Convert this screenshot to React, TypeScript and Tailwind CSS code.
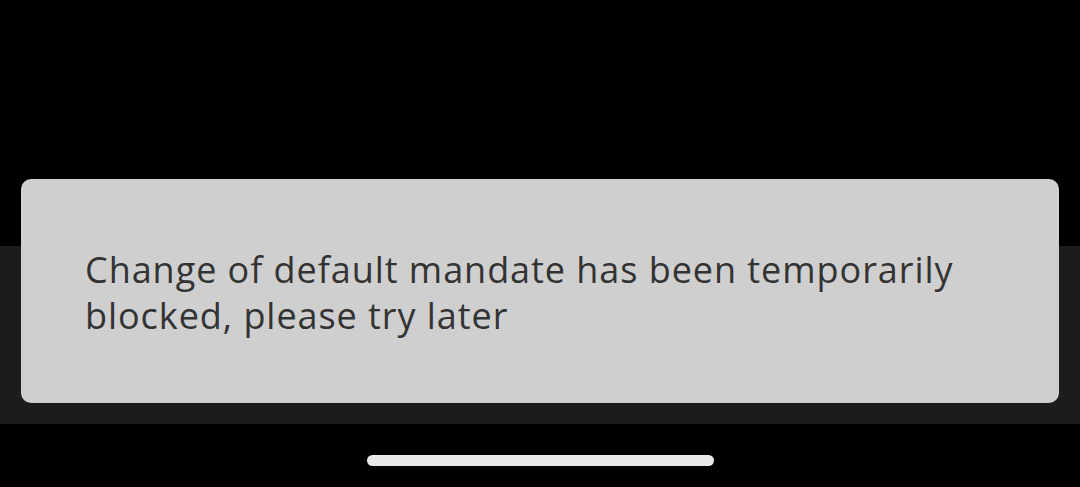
import React from "react";

export default function App() {
  return (
    <div className="relative w-[1080px] h-[487px] bg-black overflow-hidden flex flex-col" style={{ fontFamily: "'Open Sans', 'Noto Sans', sans-serif" }}>
      <div className="h-[246px] bg-black" />
      <div className="h-[178px] bg-[#1c1c1e]" />
      <div className="flex-1 bg-black flex justify-center pt-[31px]">
        <div className="w-[347px] h-[11px] rounded-full bg-[#e8e8e8]" />
      </div>
      <div className="absolute left-[21px] top-[179px] w-[1038px] h-[224px] rounded-[10px] bg-[#cfcfcf] flex items-center pl-[64px] pr-[20px] pt-[4px]">
        <p className="text-[36px] leading-[46px] text-[#333333] tracking-[0.95px] whitespace-nowrap">
          Change of default mandate has been temporarily
          <br />
          blocked, please try later
        </p>
      </div>
    </div>
  );
}
